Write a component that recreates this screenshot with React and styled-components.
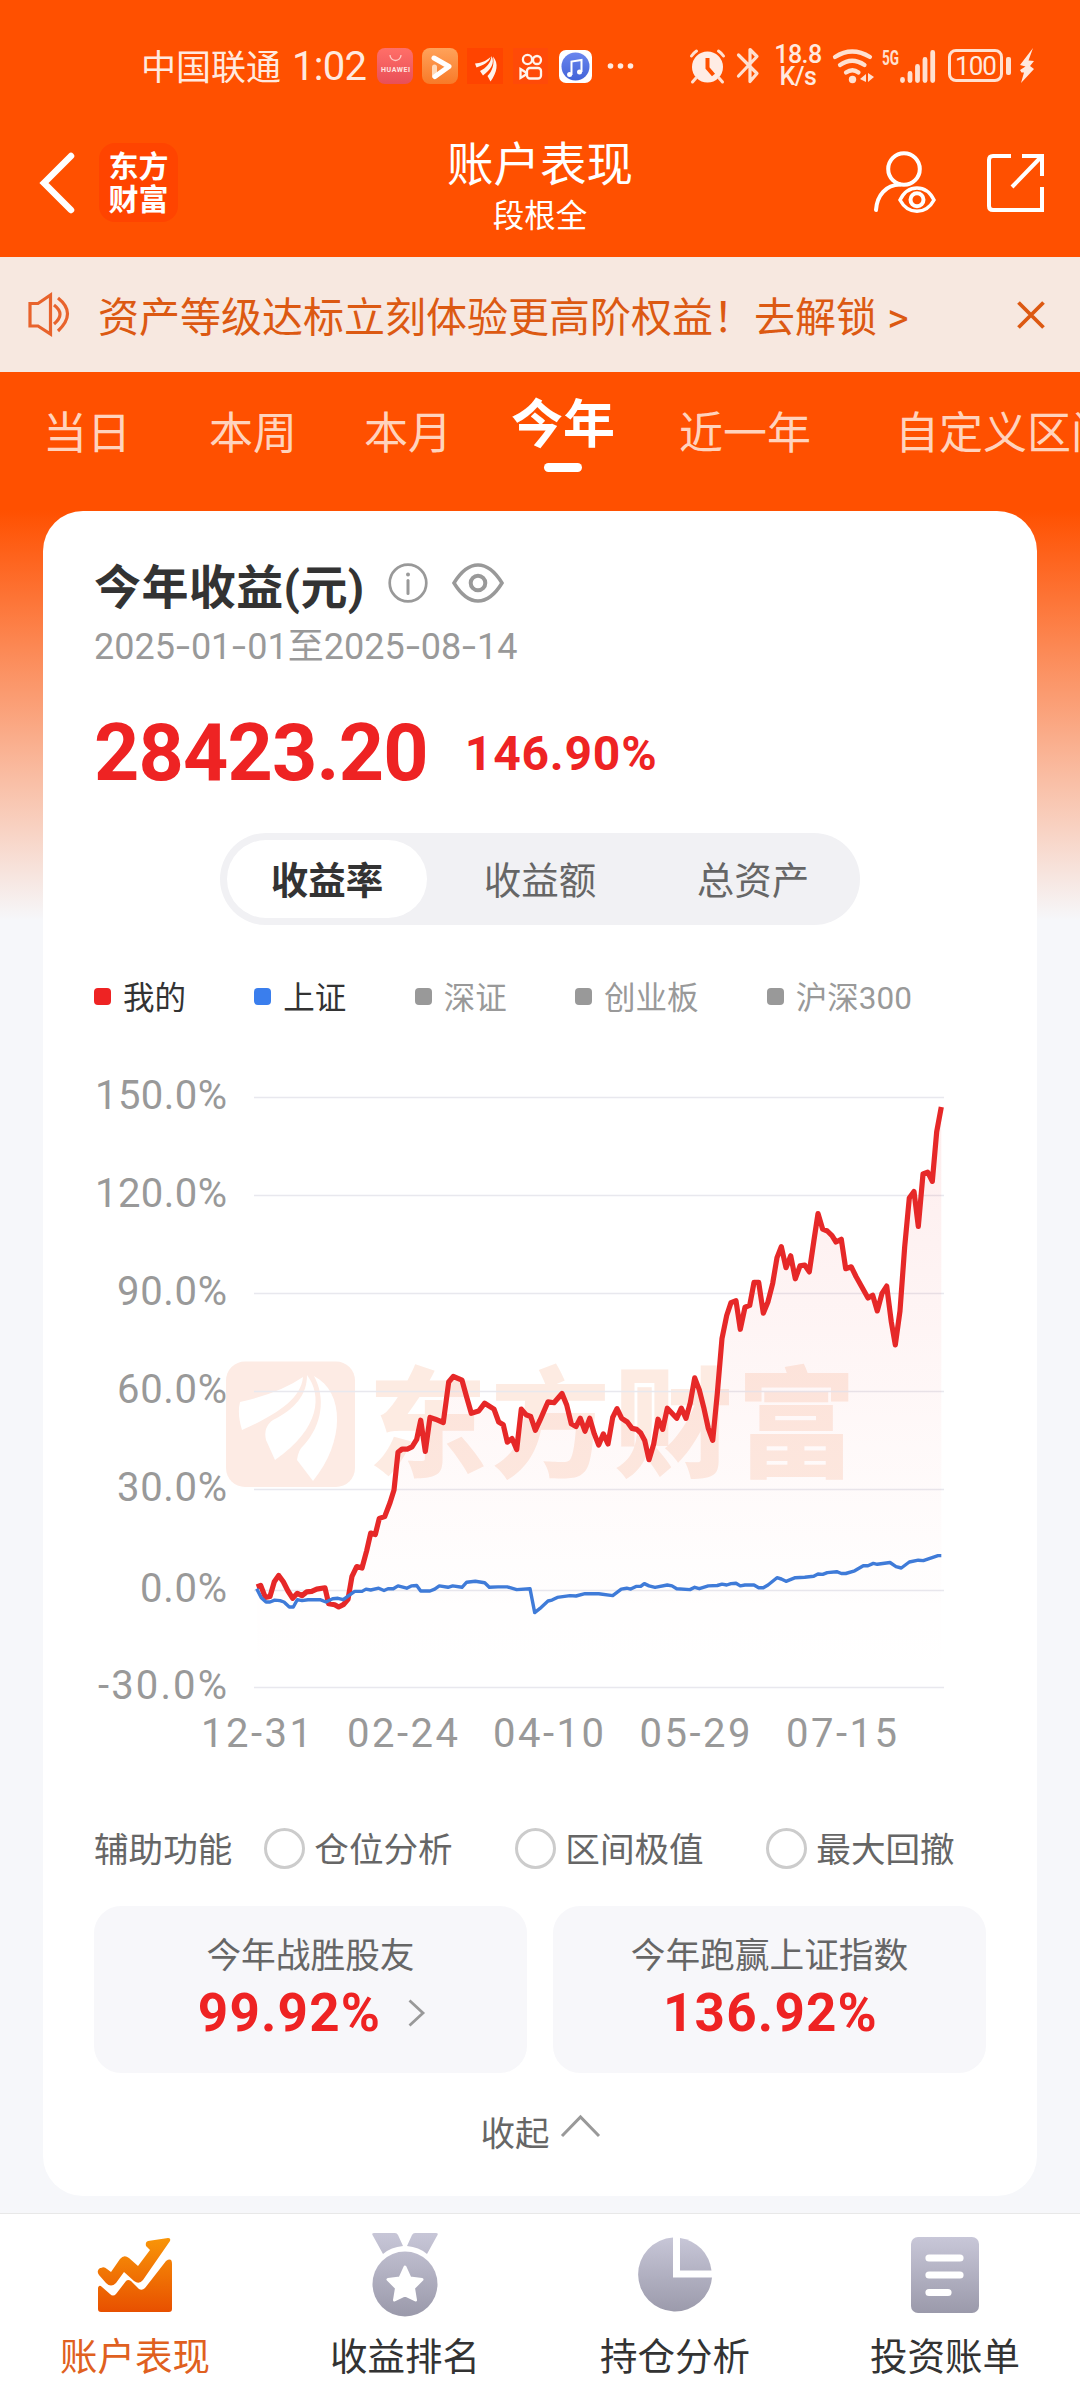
import { Fragment } from 'react';
import styled, { createGlobalStyle, css } from 'styled-components';

const GlobalStyle = createGlobalStyle`
  * {
    box-sizing: border-box;
  }

  body {
    margin: 0;
    font-family: Roboto, 'Noto Sans CJK SC', sans-serif;
    color: #333;
  }
`;

const SPage = styled.div`
  display: flex;
  flex-direction: column;
  width: 1080px;
  height: 2400px;
  overflow: hidden;
  background: linear-gradient(#ff5000 0, #ff5000 510px, #f6f7fa 920px);
`;

const SStatusBar = styled.div`
  display: flex;
  align-items: center;
  flex: none;
  height: 107px;
  padding: 24px 46px 0 141px;
  color: #ffe9df;
  white-space: nowrap;
`;

const SCarrier = styled.span`
  width: 151px;
  margin-top: -2px;
  font-size: 35px;
`;

const SClock = styled.span`
  width: 84px;
  margin-top: 2px;
  font-size: 40px;
  letter-spacing: -0.7px;
`;

const SIcon = styled.svg`
  display: block;
  flex: none;
  width: ${({ $w }) => $w}px;
  height: ${({ $h }) => $h}px;
  margin-left: ${({ $ml = 0 }) => $ml}px;
  overflow: visible;
`;

const SStatusRight = styled.div`
  display: flex;
  align-items: center;
  margin-left: auto;
`;

const SSpeed = styled.div`
  display: flex;
  flex-direction: column;
  width: 50px;
  margin-left: 14px;
  font-size: 25px;
  font-weight: 500;
  line-height: 22px;
  text-align: center;
  letter-spacing: -0.5px;
`;

const SBattery = styled.div`
  position: relative;
  width: 55px;
  height: 33px;
  margin: 0 17px 0 13px;
  border: 3px solid #ffe0d0;
  border-radius: 8px;
  font-size: 26px;
  line-height: 28px;
  text-align: center;
  letter-spacing: -1px;

  &::after {
    content: '';
    position: absolute;
    top: 5px;
    right: -11px;
    width: 5px;
    height: 18px;
    border-radius: 2px;
    background: #ffe0d0;
  }
`;

const SHeader = styled.header`
  display: grid;
  grid-template-columns: 300px 1fr 300px;
  align-items: center;
  flex: none;
  height: 150px;
  padding-top: 1px;
  color: #fff;
`;

const SHeaderSide = styled.div`
  display: flex;
  align-items: center;
  justify-content: ${({ $end }) => ($end ? 'flex-end' : 'flex-start')};
  padding: 0 36px 0 40px;
`;

const SBrand = styled.div`
  display: flex;
  flex-direction: column;
  justify-content: center;
  width: 79px;
  height: 79px;
  margin-left: 26px;
  border-radius: 16px;
  background: #ff4400;
  font-size: 30px;
  font-weight: 700;
  line-height: 33px;
  text-align: center;
`;

const STitle = styled.h1`
  margin: 0;
  padding-top: 13px;
  font-size: 46.5px;
  font-weight: 400;
  line-height: 56px;
  text-align: center;
`;

const SSubTitle = styled.p`
  margin: 0;
  font-size: 31.5px;
  line-height: 48px;
  text-align: center;
`;

const SNotice = styled.div`
  display: flex;
  align-items: center;
  flex: none;
  height: 115px;
  padding: 0 35px 0 28px;
  background: #f7e8e0;
  color: #dc5912;
`;

const SNoticeText = styled.p`
  flex: 1;
  margin: 0 0 1px 28px;
  font-size: 41px;
  white-space: pre;
`;

const STabs = styled.nav`
  display: flex;
  flex: none;
  height: 139px;
  overflow: hidden;
  white-space: nowrap;
`;

const STab = styled.span`
  position: relative;
  flex: none;
  margin-left: ${({ $ml }) => $ml}px;
  padding-top: 31px;
  color: #ffd3bd;
  font-size: 44px;
  line-height: 62px;

  ${({ $active }) =>
    $active &&
    css`
      padding-top: 23px;
      color: #fff;
      font-size: 52px;
      font-weight: 700;

      &::after {
        content: '';
        position: absolute;
        left: 50%;
        top: 91px;
        width: 38px;
        height: 9px;
        margin-left: -19px;
        border-radius: 5px;
        background: #fff;
      }
    `}
`;

const SCard = styled.main`
  flex: none;
  height: 1685px;
  margin: 0 43px;
  padding: 42px 51px 0;
  border-radius: 40px;
  background: #fff;
`;

const SCardTitle = styled.h2`
  display: flex;
  align-items: center;
  height: 60px;
  margin: 0;
  font-size: 47px;
  font-weight: 700;
  letter-spacing: 0.4px;
`;

const SRange = styled.p`
  margin: 3px 0 0;
  color: #999;
  font-size: 36px;
  line-height: 62px;
`;

const SDash = styled.span`
  display: inline-block;
  margin: 0 3px;
  transform: scaleX(1.4);
`;

const SAmount = styled.div`
  display: flex;
  align-items: center;
  height: 78px;
  margin-top: 36px;
  color: #ee2323;
  font-size: 79px;
  font-weight: 700;
  letter-spacing: -0.8px;
`;

const SRate = styled.span`
  margin-left: 37px;
  font-size: 48px;
  letter-spacing: 0.8px;
`;

const SSegment = styled.div`
  display: flex;
  width: 640px;
  height: 92px;
  margin: 41px auto 0;
  padding: 7px;
  border-radius: 46px;
  background: #f1f1f4;
`;

const SSegmentItem = styled.span`
  flex: none;
  width: 200px;
  height: 78px;
  margin-right: 13px;
  border-radius: 39px;
  background: ${({ $active }) => ($active ? '#fff' : 'none')};
  color: ${({ $active }) => ($active ? '#333' : '#666')};
  font-size: 37.5px;
  font-weight: ${({ $active }) => ($active ? 700 : 400)};
  line-height: 83px;
  text-align: center;
`;

const SLegend = styled.ul`
  display: flex;
  align-items: center;
  height: 40px;
  margin: 52px 0 0;
  padding: 0;
  list-style: none;
`;

const SLegendItem = styled.li`
  display: flex;
  align-items: center;
  margin-right: 68.3px;
  color: ${({ $on }) => ($on ? '#333' : '#999')};
  font-size: 31.5px;
  line-height: 44px;
  padding-top: 4px;

  &::before {
    content: '';
    width: 17px;
    height: 17px;
    margin: -6px 12px 0 0;
    border-radius: 4px;
    background: ${({ $color }) => $color};
  }
`;

const SChart = styled.svg`
  display: block;
  width: 892px;
  height: 700px;
  margin-top: 43px;
  overflow: visible;
`;

const SOptions = styled.div`
  display: flex;
  align-items: center;
  height: 40px;
  margin-top: 70px;
  color: #666;
  font-size: 34.6px;
  line-height: 42px;
  white-space: nowrap;
`;

const SOption = styled.label`
  display: flex;
  align-items: center;
  flex: none;
  width: 251px;

  &:first-of-type {
    margin-left: 32px;
  }

  &::before {
    content: '';
    width: 35px;
    height: 35px;
    margin: -4px 9px 0 0;
    border: 3px solid #ccc;
    border-radius: 50%;
  }
`;

const SStats = styled.div`
  display: grid;
  grid-template-columns: 433px 433px;
  gap: 26px;
  margin-top: 36px;
`;

const SStat = styled.div`
  height: 167px;
  padding-top: 29px;
  border-radius: 27px;
  background: #f7f7fa;
  color: #666;
  font-size: 34.7px;
  line-height: 43px;
  text-align: center;
`;

const SStatValue = styled.div`
  display: flex;
  align-items: center;
  justify-content: center;
  height: 60px;
  margin-top: 5px;
  padding-left: 2px;
  color: #ee2323;
  font-size: 53px;
  font-weight: 700;
  letter-spacing: 1.2px;
`;

const SCollapse = styled.div`
  display: flex;
  justify-content: center;
  height: 40px;
  margin-top: 40px;
  color: #666;
  font-size: 34.5px;
  line-height: 42px;
`;

const SNav = styled.footer`
  display: grid;
  grid-template-columns: repeat(4, 1fr);
  flex: none;
  height: 187px;
  margin-top: 17px;
  border-top: 1px solid #e8e8e8;
  background: #fff;
`;

const SNavItem = styled.div`
  display: flex;
  flex-direction: column;
  align-items: center;
  padding-top: 17px;
  color: ${({ $active }) => ($active ? '#e06020' : '#333')};
  font-size: 37.5px;
  line-height: 50px;

  > svg {
    margin: 0 0 17px;
  }
`;

const TABS = [
  { label: '当日', ml: 43 },
  { label: '本周', ml: 78 },
  { label: '本月', ml: 67 },
  { label: '今年', ml: 59, active: true },
  { label: '近一年', ml: 64 },
  { label: '自定义区间', ml: 84 },
];

const LEGENDS = [
  { label: '我的', color: '#ee2323', on: true },
  { label: '上证', color: '#3a7eed', on: true },
  { label: '深证', color: '#999' },
  { label: '创业板', color: '#999' },
  { label: '沪深300', color: '#999' },
];

const Y_AXIS = [
  { label: '150.0%', y: 1097.5, w: 132 },
  { label: '120.0%', y: 1195.5, w: 132 },
  { label: '90.0%', y: 1293.5, w: 110 },
  { label: '60.0%', y: 1391.5, w: 110 },
  { label: '30.0%', y: 1489.5, w: 110 },
  { label: '0.0%', y: 1590.5, w: 87 },
  { label: '-30.0%', y: 1687.5, w: 129 },
];

const X_AXIS = [
  { label: '12-31', x: 256 },
  { label: '02-24', x: 402 },
  { label: '04-10', x: 548 },
  { label: '05-29', x: 694.5 },
  { label: '07-15', x: 841 },
];

const MINE = `256.7,1587 260.7,1585.5 265.3,1597.4 270,1596.5 274.3,1581.8 278.7,1575.4 283.3,1581.8 288,1591
292.7,1598.3 297.3,1593.3 302,1595.6 306.7,1591.9 311.7,1591.4 316.7,1589.1 325,1587.8 328.7,1603.8 334.7,1604.7
338.7,1607 343.3,1604.7 348,1599.2 352,1576.3 356.7,1566.6 362,1568 366.7,1550.6 370.7,1533.1 375.3,1534.5
379.3,1518.4 384.7,1516.6 390,1502.8 394,1490 398,1452.3 402,1449.1 407.3,1449.1 412,1446.8 416.7,1439.4
420.7,1420.2 425.3,1451.4 430,1417.4 435.3,1419.2 443.3,1422.5 448.7,1382 453.3,1376.5 462,1380.2 466.7,1397.2
471.3,1413.3 478.7,1411 484.7,1403.2 494,1409.1 498.7,1422 503.3,1424.8 507.3,1442.2 512,1438.5 516.7,1449.6
521.3,1409.1 526,1414.7 530.7,1416.5 535.3,1430.3 540,1420.2 548,1401.8 554,1402.7 562,1393.5 566.7,1405
571.3,1423.8 576,1426.6 580.3,1418.3 585,1431.2 589.7,1418.3 594.3,1433.9 598.7,1445 603.3,1433.9 608,1444
612.7,1417.4 617,1408.7 621.7,1418.3 627.3,1422 632,1428.4 636.7,1429.4 640.7,1433 644.7,1440.4 649,1459.7
653.7,1444 658,1419.2 662.7,1429.4 667.3,1408.2 676.7,1418.3 681.3,1408.2 686,1418.3 690.3,1402.7 694.7,1377.9
699.3,1389.9 703.7,1407.3 708.3,1428.4 712.7,1440.4 717.3,1393.5 722,1338.4 726.7,1315.5 731,1302.6 736,1300.8
740.3,1329.3 745,1307.2 749.7,1305.4 754,1282.4 758.7,1282.4 763.3,1313.2 768,1301.7 772.7,1283.3 777,1257.6
781.3,1246.6 786,1267.7 790.7,1255.8 795.3,1278.8 800,1265.9 804.7,1265 809.3,1271.9 813.7,1242 818,1213.6
822.7,1229.2 827.3,1231 832,1235.6 836,1242 841.3,1239.3 845.7,1268.7 851.3,1266.8 856,1276.5 868,1298
872.7,1295.3 877.3,1310.9 882,1293.4 886.7,1286.1 891.3,1321.9 895.3,1344.9 900,1310.9 904.7,1246.6 909.3,1198
914,1191.5 918.3,1226.4 923,1174 927.7,1172.2 932.3,1181.4 936.7,1131.8 941.3,1107`;

const SHANGHAI = `256.7,1588.7 261.3,1597.8 266,1602 270,1602 274.7,1600.1 280,1600.6 284,1602 289.3,1607 293.3,1607
297.3,1599.7 302,1600.6 308,1599.7 320,1599.7 326,1602 332.7,1598.8 338,1598.3 343.3,1599.7 348.7,1595.6
354.7,1591.4 362,1591.4 366,1589.1 370.7,1590 378.7,1588.2 384,1590.5 388,1588.7 393.3,1588.7 398,1585.9
406.7,1588.2 411.3,1585.9 416.7,1585.5 420.7,1591 430,1591 434.7,1589.1 439.3,1585.9 448,1587.3 452.7,1585.9
462,1587.3 466.7,1582.2 475.3,1581.3 484.7,1582.7 489.3,1587.3 498,1586.9 507.3,1586.9 516.7,1589.6 530,1588.7
534.7,1612.6 540,1608.4 548,1601 552,1600.1 557.3,1597.4 570,1595.6 576,1596 585,1593.7 598.7,1593.7 612.7,1595.6
621.3,1589.1 626.7,1588.2 630.7,1589.1 636,1586.4 640.7,1586.4 644.3,1583.6 649,1585.9 655,1587.3 667.3,1585
672,1585.9 676.7,1588.7 690,1589.6 694.7,1587.3 699.3,1588.7 708.3,1585.9 717.3,1585.5 722,1584.1 726.7,1585
731,1583.6 736,1583.2 740.3,1585.9 745,1585 754,1585 758.7,1587.8 763.3,1587.8 768,1585 777,1577.7 781.3,1579
786,1581.3 795.3,1577.7 804.7,1577.2 813.7,1576.3 818,1574 822.7,1574.4 827.3,1572.6 836.7,1571.7 841.3,1573.5
845.7,1573.5 854.7,1570.8 863.3,1565.7 868,1565.7 873.3,1563.4 877.3,1564.3 890,1562.5 896,1566.6 901.3,1568
909.3,1562 918.3,1560.2 923.3,1560.6 938,1555.6 941.3,1555.6`;

const AppIcons = () => (
  <SIcon viewBox="376 47 258 36" $w={258} $h={36}>
    <defs>
      <linearGradient id="huawei" x1="0" y1="0" x2="0" y2="1">
        <stop offset="0" stopColor="#ff6f68" />
        <stop offset="1" stopColor="#e94f58" />
      </linearGradient>
      <linearGradient id="video" x1="0" y1="0" x2="0" y2="1">
        <stop offset="0" stopColor="#ffa25a" />
        <stop offset="1" stopColor="#f87a28" />
      </linearGradient>
      <linearGradient id="music" x1="0" y1="0" x2="0" y2="1">
        <stop offset="0" stopColor="#6a86ee" />
        <stop offset="1" stopColor="#4263d8" />
      </linearGradient>
    </defs>
    <rect x="377" y="47" width="36" height="36" rx="8" fill="url(#huawei)" />
    <path d="M390 54a5.5 5.5 0 0 0 11 0" fill="none" stroke="#ffc9c4" strokeWidth="1.3" />
    <text x="381" y="71" fontSize="7" fontWeight="700" fill="#ffe4e0" textLength="29">
      HUAWEI
    </text>
    <rect x="422" y="47" width="36" height="36" rx="8" fill="url(#video)" />
    <path d="M434.500 75v-9" fill="none" stroke="#ffd9b8" strokeWidth="5" strokeLinecap="round" />
    <path d="M434 57l15 8.500l-14 10" fill="none" stroke="#fff" strokeWidth="5" strokeLinecap="round" strokeLinejoin="round" />
    <rect x="467" y="47" width="36" height="36" fill="#ff4400" />
    <g fill="#fff3ec">
      <path d="M475 62.500c5-.5 11-2 15.500-6.500c-1 5-7 8-14 10.500z" />
      <path d="M480 70c6-3 11-8 11.500-15c4 7-1 14-8.500 19.500z" />
      <path d="M493 55.500c6 7 4 16-2.500 25l-3-5.500c5-5 7-12 5.500-19.500z" />
    </g>
    <rect x="513" y="47" width="35" height="36" fill="#ff4a08" />
    <g fill="none" stroke="#fff3ec" strokeWidth="2.300">
      <circle cx="527.500" cy="58.500" r="4.600" />
      <circle cx="537" cy="59" r="4" />
      <rect x="527" y="67" width="14" height="10.500" rx="3" />
      <path d="M520.500 68l5.500 3.500v2l-5.500 3.500z" />
    </g>
    <rect x="559" y="49" width="33" height="33" rx="7" fill="#fff" />
    <circle cx="575.500" cy="65.500" r="14" fill="url(#music)" />
    <path d="M571.500 74V60.500l10-1.500V71" fill="none" stroke="#fff" strokeWidth="2" />
    <circle cx="569.600" cy="73.500" r="2.500" fill="#fff" />
    <circle cx="579.500" cy="71" r="2.500" fill="#fff" />
    <g fill="#ffe9df">
      <circle cx="610.500" cy="65" r="2.800" />
      <circle cx="620.500" cy="65" r="2.800" />
      <circle cx="630.500" cy="65" r="2.800" />
    </g>
  </SIcon>
);

const StatusBar = () => (
  <SStatusBar>
    <SCarrier>中国联通</SCarrier>
    <SClock>1:02</SClock>
    <AppIcons />
    <SStatusRight>
      <SIcon viewBox="0 0 35 34" $w={35} $h={34}>
        <circle cx="17.500" cy="18" r="15.500" fill="#ffece4" />
        <path d="M6 29l-3.500 4M29 29l3.500 4M1.500 7q2-3 5-5M33.500 7q-2-3-5-5" stroke="#ffe0d0" strokeWidth="3" fill="none" strokeLinecap="round" />
        <path d="M17.500 9v10l6 7" stroke="#ff5000" strokeWidth="4" fill="none" />
      </SIcon>
      <SIcon viewBox="0 0 22 37" $w={22} $h={37} $ml={12}>
        <path d="M1.500 8L20 26.500L13 34.500V2.500L20 9.500L1.500 29" fill="none" stroke="#ffe0d0" strokeWidth="3.200" strokeLinejoin="round" strokeLinecap="round" />
      </SIcon>
      <SSpeed>
        <span>18.8</span>
        <span>K/s</span>
      </SSpeed>
      <SIcon viewBox="833 48 41 34" $w={41} $h={34} $ml={10}>
        <g fill="none" stroke="#ffe0d0" strokeWidth="4.200" strokeLinecap="round">
          <path d="M835 56q17-11 35 0M840 64q12-8.500 24.500 0M846 71.500q6.500-4.500 12.500 0" />
        </g>
        <circle cx="852.500" cy="78.500" r="3.700" fill="#ffe0d0" />
        <path d="M866 73v8l-6-3zM868 81v-9l6 4z" fill="#ffe0d0" />
      </SIcon>
      <SIcon viewBox="882 48 53 34" $w={53} $h={34} $ml={8}>
        <text x="882" y="63.500" fontSize="21" fontWeight="700" fill="#ffe0d0" textLength="17" lengthAdjust="spacingAndGlyphs">
          5G
        </text>
        <path d="M902.500 78.500v1M910 72.500v7M917.500 65.500v14M925 58.500V79.500M932.700 51.500V79.500" stroke="#ffe0d0" strokeWidth="4.800" strokeLinecap="round" />
      </SIcon>
      <SBattery>100</SBattery>
      <SIcon viewBox="0 0 14 35" $w={14} $h={35}>
        <path d="M13 0L0 17l5.500 1.500L0 22l1.500 2.500H4L1 35L14 21l-4-3l4-5l-5.500-.5z" fill="#ffe9df" />
      </SIcon>
    </SStatusRight>
  </SStatusBar>
);

const Header = () => (
  <SHeader>
    <SHeaderSide>
      <SIcon viewBox="0 0 33 60" $w={33} $h={60}>
        <path d="M31 3L4 30L31 57" fill="none" stroke="#fff" strokeWidth="6.500" strokeLinecap="round" />
      </SIcon>
      <SBrand>
        <span>东方</span>
        <span>财富</span>
      </SBrand>
    </SHeaderSide>
    <div>
      <STitle>账户表现</STitle>
      <SSubTitle>段根全</SSubTitle>
    </div>
    <SHeaderSide $end>
      <SIcon viewBox="873 152 62 61" $w={62} $h={61}>
        <g fill="none" stroke="#fff" strokeWidth="4" strokeLinecap="round">
          <circle cx="904" cy="169" r="15.800" />
          <path d="M876 210c1-15 10-25 24-25.500" />
          <path d="M900 200C908 184 926 184 934 200C926 215 908 215 900 200z" strokeWidth="3.500" />
          <circle cx="917" cy="199.800" r="6.500" />
        </g>
      </SIcon>
      <SIcon viewBox="987 153 57 58" $w={57} $h={58} $ml={52}>
        <path d="M1011 155h-18q-4 0-4 4v46q0 4 4 4h49v-23M1022 155h20v20M1041 156l-29 30" fill="none" stroke="#fff" strokeWidth="4" />
      </SIcon>
    </SHeaderSide>
  </SHeader>
);

const Notice = () => (
  <SNotice>
    <SIcon viewBox="28 295 42 42" $w={42} $h={42}>
      <g fill="none" stroke="#e8632c" strokeWidth="3.200">
        <path d="M30 304.500h8l12.500-8.500v39l-12.500-8h-8z" />
        <path d="M54 306q12 9 0 19M58 299q19 15 0 33" />
      </g>
    </SIcon>
    <SNoticeText>资产等级达标立刻体验更高阶权益！去解锁 &gt;</SNoticeText>
    <SIcon viewBox="0 0 28 28" $w={28} $h={28}>
      <path d="M1.500 1.500l25 25M26.500 1.500l-25 25" stroke="#dc5912" strokeWidth="3.800" />
    </SIcon>
  </SNotice>
);

const DateRange = ({ text }) => (
  <SRange>
    {text.split('-').map((part, i) => (
      <Fragment key={i}>
        {i > 0 && <SDash>-</SDash>}
        {part}
      </Fragment>
    ))}
  </SRange>
);

const Chart = () => (
  <SChart viewBox="94 1060 892 700">
    <defs>
      <linearGradient id="area" gradientUnits="userSpaceOnUse" x1="0" y1="1107" x2="0" y2="1688">
        <stop offset="0" stopColor="#ee2323" stopOpacity="0.08" />
        <stop offset="0.8" stopColor="#ee2323" stopOpacity="0.008" />
        <stop offset="1" stopColor="#ee2323" stopOpacity="0" />
      </linearGradient>
    </defs>
    <rect x="226" y="1361.500" width="129" height="125.500" rx="19" fill="#fdebe4" />
    <g fill="#fff">
      <path d="M240 1402q40-9 63-25c-2 24-32 40-61 53q-5-16-2-28z" />
      <path d="M307 1375c15 20 14 53-32 85l-9-20q-3-13 7-20c22-11 34-25 34-45z" />
      <path d="M314 1376c31 16 31 66-1 105l-16-21q1-10 7-15c18-20 22-47 10-69z" />
    </g>
    <text x="368" y="1468" fontSize="119" fontWeight="900" fill="#fdebe2" textLength="488">
      东方财富
    </text>
    {Y_AXIS.map(({ label, y, w }) => (
      <g key={label}>
        <path d={`M254 ${y}H944`} stroke="#e8e8ee" strokeWidth="1.500" />
        <text x={227 - w} y={y + 11.5} fontSize="40" fill="#999" textLength={w}>
          {label}
        </text>
      </g>
    ))}
    {X_AXIS.map(({ label, x }) => (
      <text key={label} x={x - 55} y="1747" fontSize="40" fill="#999" textLength="111">
        {label}
      </text>
    ))}
    <polygon points={`256.7,1688 ${MINE} 941.3,1688`} fill="url(#area)" />
    <polyline points={MINE} fill="none" stroke="#e62828" strokeWidth="5.200" strokeLinejoin="round" />
    <polyline points={SHANGHAI} fill="none" stroke="#3f7bd8" strokeWidth="3.400" strokeLinejoin="round" />
  </SChart>
);

const TrendIcon = () => (
  <SIcon viewBox="94 2232 82 84" $w={82} $h={84}>
    <defs>
      <linearGradient id="orange" gradientUnits="userSpaceOnUse" x1="0" y1="2237" x2="0" y2="2313">
        <stop offset="0" stopColor="#f99708" />
        <stop offset="1" stopColor="#e85000" />
      </linearGradient>
    </defs>
    <path d="M101 2269q3-2 6 1l4 3l9-13q4-5 9-1l9 8l12-16l-4-4q-1-4 2-5l20-3q3 0 2 3l-27 39q-4 5-9 1l-10-9l-8 11q-5 5-10 0l-7-8q-3-4 1-7z" fill="url(#orange)" />
    <path d="M98 2289q1-4 4-1l8 7q3 3 6 0l10-13q2-2 5 0l8 8q3 2 6-1l21-27q6-4 6 3v45q0 3-3 3h-68q-3 0-3-3z" fill="url(#orange)" />
  </SIcon>
);

const GrayGradient = ({ id, y1, y2 }) => (
  <defs>
    <linearGradient id={id} gradientUnits="userSpaceOnUse" x1="0" y1={y1} x2="0" y2={y2}>
      <stop offset="0" stopColor="#c8c7d8" />
      <stop offset="1" stopColor="#9a99aa" />
    </linearGradient>
  </defs>
);

const MedalIcon = () => (
  <SIcon viewBox="365 2232 82 84" $w={82} $h={84}>
    <GrayGradient id="medal" y1="2233" y2="2318" />
    <g fill="url(#medal)">
      <path d="M375 2234h21q2 0 3 2l5 11q-12 1-20 8l-10.500-19q-1-2 1.500-2zM437 2234h-21q-2 0-3 2l-5 11q12 1 20 8l10.500-19q1-2-1.500-2z" />
      <circle cx="406" cy="2285" r="32.500" />
    </g>
    <path d="M406 2268l5 11l12 1.500l-8.500 8.500l2 12l-10.500-5l-10.500 5l2-12l-8.500-8.500l12-1.500z" fill="#fff" stroke="#fff" strokeWidth="3" strokeLinejoin="round" />
  </SIcon>
);

const PieIcon = () => (
  <SIcon viewBox="634 2232 82 84" $w={82} $h={84}>
    <GrayGradient id="pie" y1="2237" y2="2315" />
    <g fill="url(#pie)">
      <path d="M673 2238.500v40h39a37 37 0 1 1-39-40z" />
      <path d="M680 2239a37 37 0 0 1 31.500 32.500H680z" />
    </g>
  </SIcon>
);

const BillIcon = () => (
  <SIcon viewBox="904 2232 82 84" $w={82} $h={84}>
    <GrayGradient id="bill" y1="2238" y2="2315" />
    <rect x="911" y="2238" width="68" height="76" rx="7" fill="url(#bill)" />
    <path d="M929 2259h31M929 2276h31M929 2293.500h19" stroke="#fff" strokeWidth="7.200" strokeLinecap="round" />
  </SIcon>
);

const NAVS = [
  { label: '账户表现', icon: <TrendIcon />, active: true },
  { label: '收益排名', icon: <MedalIcon /> },
  { label: '持仓分析', icon: <PieIcon /> },
  { label: '投资账单', icon: <BillIcon /> },
];

const App = () => {
  return (
    <SPage>
      <GlobalStyle />
      <StatusBar />
      <Header />
      <Notice />
      <STabs>
        {TABS.map(({ label, ml, active }) => (
          <STab key={label} $ml={ml} $active={active}>
            {label}
          </STab>
        ))}
      </STabs>
      <SCard>
        <SCardTitle>
          今年收益(元)
          <SIcon viewBox="0 0 40 40" $w={40} $h={40} $ml={23}>
            <circle cx="20" cy="20" r="18.300" fill="none" stroke="#999" strokeWidth="2.700" />
            <circle cx="20" cy="11.500" r="2" fill="#999" />
            <path d="M20 17.500v13" stroke="#999" strokeWidth="3" strokeLinecap="round" />
          </SIcon>
          <SIcon viewBox="0 0 52 40" $w={52} $h={40} $ml={24}>
            <path d="M2 20Q13 2 26 2t24 18Q39 38 26 38T2 20z" fill="none" stroke="#999" strokeWidth="3.500" />
            <circle cx="26" cy="20" r="7.300" fill="none" stroke="#999" strokeWidth="4" />
          </SIcon>
        </SCardTitle>
        <DateRange text="2025-01-01至2025-08-14" />
        <SAmount>
          28423.20
          <SRate>146.90%</SRate>
        </SAmount>
        <SSegment>
          <SSegmentItem $active>收益率</SSegmentItem>
          <SSegmentItem>收益额</SSegmentItem>
          <SSegmentItem>总资产</SSegmentItem>
        </SSegment>
        <SLegend>
          {LEGENDS.map(({ label, color, on }) => (
            <SLegendItem key={label} $color={color} $on={on}>
              {label}
            </SLegendItem>
          ))}
        </SLegend>
        <Chart />
        <SOptions>
          辅助功能
          <SOption>仓位分析</SOption>
          <SOption>区间极值</SOption>
          <SOption>最大回撤</SOption>
        </SOptions>
        <SStats>
          <SStat>
            今年战胜股友
            <SStatValue>
              99.92%
              <SIcon viewBox="0 0 17 28" $w={17} $h={28} $ml={27}>
                <path d="M1.500 1.500L15 14L1.500 26.500" fill="none" stroke="#999" strokeWidth="2.800" />
              </SIcon>
            </SStatValue>
          </SStat>
          <SStat>
            今年跑赢上证指数
            <SStatValue>136.92%</SStatValue>
          </SStat>
        </SStats>
        <SCollapse>
          收起
          <SIcon viewBox="0 0 39 21" $w={39} $h={21} $ml={11}>
            <path d="M1 23L19.500 4L38 23" fill="none" stroke="#999" strokeWidth="3" />
          </SIcon>
        </SCollapse>
      </SCard>
      <SNav>
        {NAVS.map(({ label, icon, active }) => (
          <SNavItem key={label} $active={active}>
            {icon}
            {label}
          </SNavItem>
        ))}
      </SNav>
    </SPage>
  );
};

export default App;
